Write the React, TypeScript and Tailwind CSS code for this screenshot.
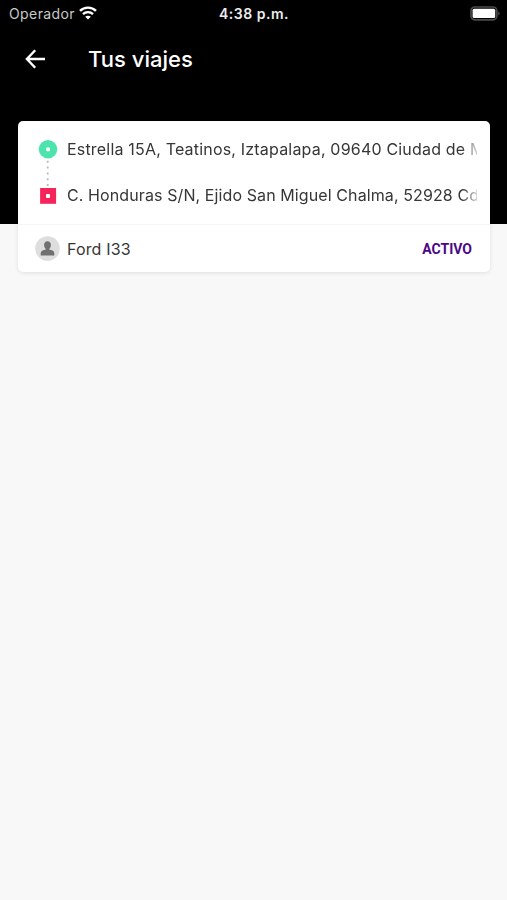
import React from "react";

function StatusBar() {
  return (
    <div className="relative flex h-7 items-center justify-between pl-[9px] pr-[7px] text-[#ececec]">
      <div className="flex items-center gap-1">
        <span className="text-[14px] leading-7 tracking-[0.4px] text-[#c9c9c9]">Operador</span>
        <svg width="18" height="14" viewBox="0 0 18 14" fill="none" stroke="#fff" strokeWidth="2.4" className="-mt-0.5">
          <path d="M1 4.9C5.4.5 12.6.5 17 4.9" />
          <path d="M4 8.1c2.8-2.7 7.2-2.7 10 0" />
          <path d="M9 13.6 6.2 10.8c1.6-1.4 4-1.4 5.6 0Z" fill="#fff" stroke="none" />
        </svg>
      </div>
      <span className="absolute left-[219px] top-0 whitespace-nowrap text-[14px] font-semibold leading-7 tracking-[0.5px]">
        4:38 p.m.
      </span>
      <svg width="30" height="15" viewBox="0 0 30 15" className="-mt-px">
        <rect x="1" y="1" width="25.8" height="12.8" rx="3.8" fill="#000" stroke="#4b4b4b" strokeWidth="1.7" />
        <rect x="2.6" y="2.7" width="22.6" height="9.4" rx="1.6" fill="#fff" />
        <path d="M28.2 5.2v4.4c1.9-.8 1.9-3.6 0-4.4Z" fill="#4b4b4b" />
      </svg>
    </div>
  );
}

function Header() {
  return (
    <div className="flex h-[62px] items-center pl-[25px] text-white">
      <svg width="21" height="22" viewBox="0 0 21 22" fill="none" stroke="#fff" strokeWidth="2.4" className="-mt-px">
        <path d="M10.2 2.2 1.9 11l8.3 8.8M2 11h18" />
      </svg>
      <h1 className="ml-[42px] whitespace-nowrap text-[22px] font-medium leading-[62px] tracking-[0.02px]">Tus viajes</h1>
    </div>
  );
}

function Address({ text, spacing }: { text: string; spacing: string }) {
  return (
    <div
      className={`w-[410px] overflow-hidden whitespace-nowrap text-[16px] leading-6 [mask-image:linear-gradient(to_right,#000_394px,transparent_415px)] ${spacing}`}
    >
      {text}
    </div>
  );
}

function Route() {
  return (
    <div className="flex h-[103px] pl-[20px] pt-[16px]">
      <svg className="shrink-0" width="20" height="70" viewBox="0 0 20 70">
        <circle cx="10" cy="12.2" r="9.2" fill="#4ce3ad" />
        <rect x="8.2" y="10.4" width="3.8" height="3.8" rx="1" fill="#fff" />
        <path d="M9.7 23.8v26" stroke="#b9b9b9" strokeWidth="1.8" strokeDasharray="2 3.8" />
        <rect x="2.1" y="51" width="16" height="15.8" fill="#f52559" />
        <rect x="8" y="57" width="4" height="4" rx="0.8" fill="#fff" />
      </svg>
      <div className="ml-[9px] flex flex-col gap-[22px]">
        <Address text="Estrella 15A, Teatinos, Iztapalapa, 09640 Ciudad de M" spacing="tracking-[0.19px]" />
        <Address text="C. Honduras S/N, Ejido San Miguel Chalma, 52928 Cd" spacing="tracking-[0.1px]" />
      </div>
    </div>
  );
}

function Driver() {
  return (
    <div className="flex h-12 items-center border-t border-[#f5f5f5] pl-[17px] pr-[18px]">
      <svg width="25" height="25" viewBox="0 0 25 25">
        <circle cx="12.5" cy="12.5" r="12.3" fill="#dedede" />
        <path
          d="M12.5 5.3c2.1 0 3.4 1.6 3.4 3.8 0 1.7-.7 3.1-1.700 3.800v.5l2.700.800c1.600.500 2.400 1.600 2.400 3.300v2.100H5.700v-2.100c0-1.700.800-2.800 2.400-3.300l2.700-.800v-.5c-1-.700-1.700-2.100-1.700-3.800 0-2.200 1.300-3.800 3.400-3.800Z"
          fill="#707070"
        />
      </svg>
      <span className="ml-[7px] text-[16px] leading-6 tracking-[0.15px]">Ford I33</span>
      <span className="ml-auto font-['Roboto',sans-serif] text-[14px] font-bold leading-6 text-[#4b0787]">ACTIVO</span>
    </div>
  );
}

export default function App() {
  return (
    <div className="h-[900px] w-[507px] overflow-hidden bg-[#f8f8f8] font-['Inter',sans-serif] text-[#363636]">
      <div className="h-56 bg-black">
        <StatusBar />
        <Header />
        <main className="ml-[18px] mt-[31px] h-[151px] w-[472px] rounded-[5px] bg-white shadow-[0_1px_4px_rgba(0,0,0,0.1)]">
          <Route />
          <Driver />
        </main>
      </div>
    </div>
  );
}
